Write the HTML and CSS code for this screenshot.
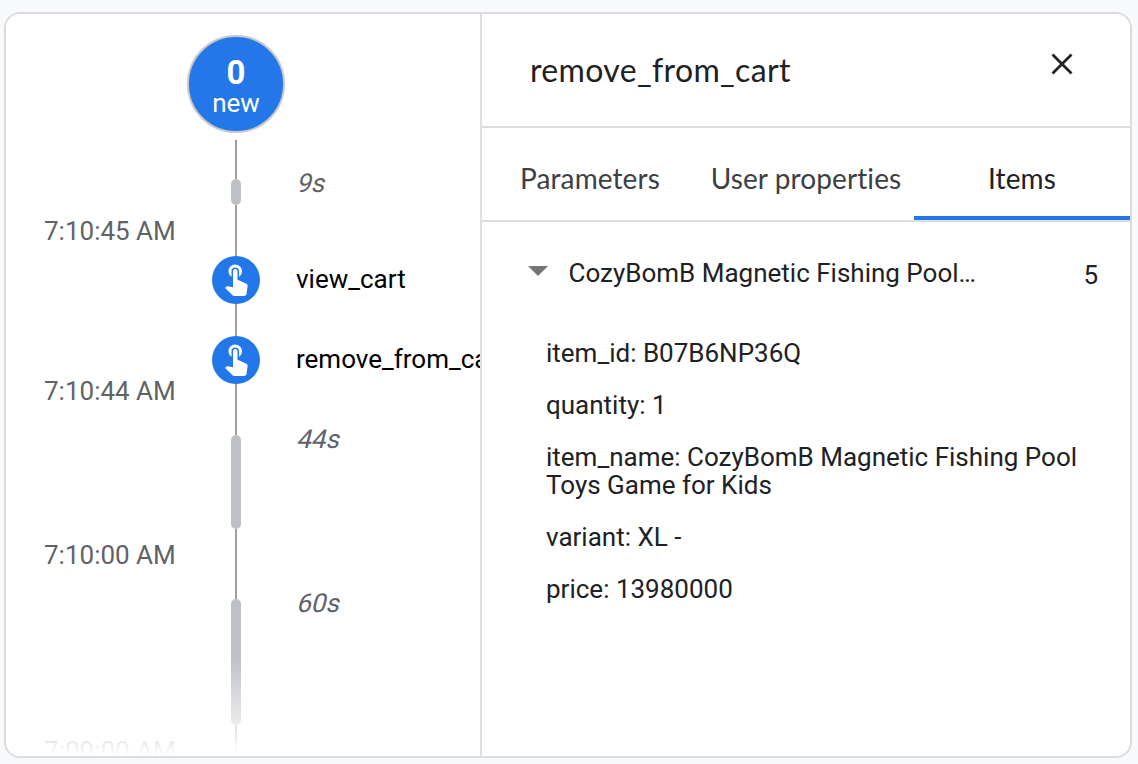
FILE: index.html
```html
<!DOCTYPE html>
<html lang="en">
<head>
<meta charset="utf-8">
<title>DebugView</title>
<link rel="stylesheet" href="styles.css">
</head>
<body>
<main class="card">
  <section class="stream">
    <div class="times">
      <span class="time">7:10:45 AM</span>
      <span class="time gap-160">7:10:44 AM</span>
      <span class="time gap-164">7:10:00 AM</span>
      <span class="time gap-196">7:09:00 AM</span>
    </div>
    <div class="axis">
      <div class="counter"><b class="count">0</b><span class="new">new</span></div>
      <i class="line line-a"></i>
      <i class="bar bar-9"></i>
      <i class="line line-b"></i>
      <span class="event"><svg viewBox="0 0 24 24" width="36" height="36"><path fill="#fff" d="M9 11.24V7.5a2.5 2.5 0 0 1 5 0v3.74c1.21-.81 2-2.18 2-3.74C16 5.01 13.99 3 11.5 3S7 5.01 7 7.5c0 1.56.79 2.93 2 3.74zm9.84 4.63l-4.54-2.26c-.17-.07-.35-.11-.54-.11H13v-6a1.5 1.5 0 0 0-3 0v10.74l-3.43-.72c-.08-.01-.15-.03-.24-.03-.31 0-.59.13-.79.33l-.79.8 4.94 4.94c.27.27.65.44 1.06.44h6.79c.75 0 1.33-.55 1.44-1.28l.75-5.27c.01-.07.02-.14.02-.2 0-.62-.38-1.16-.91-1.38z"/></svg></span>
      <i class="line line-c"></i>
      <span class="event"><svg viewBox="0 0 24 24" width="36" height="36"><path fill="#fff" d="M9 11.24V7.5a2.5 2.5 0 0 1 5 0v3.74c1.21-.81 2-2.18 2-3.74C16 5.01 13.99 3 11.5 3S7 5.01 7 7.5c0 1.56.79 2.93 2 3.74zm9.84 4.63l-4.54-2.26c-.17-.07-.35-.11-.54-.11H13v-6a1.5 1.5 0 0 0-3 0v10.74l-3.43-.72c-.08-.01-.15-.03-.24-.03-.31 0-.59.13-.79.33l-.79.8 4.94 4.94c.27.27.65.44 1.06.44h6.79c.75 0 1.33-.55 1.44-1.28l.75-5.27c.01-.07.02-.14.02-.2 0-.62-.38-1.16-.91-1.38z"/></svg></span>
      <i class="line line-b"></i>
      <i class="bar bar-44"></i>
      <i class="line line-d"></i>
      <i class="bar bar-60"></i>
      <i class="line line-e"></i>
    </div>
    <div class="labels">
      <em class="wait">9s</em>
      <span class="name name-first">view_cart</span>
      <span class="name">remove_from_cart</span>
      <em class="wait">44s</em>
      <em class="wait wait-last">60s</em>
    </div>
    <div class="fade"></div>
  </section>
  <section class="detail">
    <header class="head">
      <h1 class="title">remove_from_cart</h1>
      <svg class="close" viewBox="0 0 22 22" width="22" height="22"><path d="M1.5 1.5l19 19M20.500 1.500l-19 19" stroke="#202124" stroke-width="2.7" fill="none"/></svg>
    </header>
    <nav class="tabs">
      <a class="tab">Parameters</a>
      <a class="tab">User properties</a>
      <a class="tab active">Items</a>
    </nav>
    <div class="item">
      <i class="caret"></i>
      <span class="item-name">CozyBomB Magnetic Fishing Pool…</span>
      <span class="qty">5</span>
    </div>
    <div class="props">
      <p>item_id: B07B6NP36Q</p>
      <p>quantity: 1</p>
      <p>item_name: CozyBomB Magnetic Fishing Pool Toys Game for Kids</p>
      <p>variant: XL -</p>
      <p>price: 13980000</p>
    </div>
  </section>
</main>
</body>
</html>
```
FILE: styles.css
```css
* { box-sizing: border-box; }
body { margin: 0; padding: 12px 6px 6px 4px; height: 764px; overflow: hidden; background: #f8f9fb; font-family: Roboto, sans-serif; font-size: 26px; color: #202124; }
.card { display: flex; height: 746px; border: 2px solid #dadce0; border-radius: 16px; background: #fff; overflow: hidden; }
.stream { position: relative; display: grid; grid-template-columns: 181px 98px 1fr; width: 476px; height: 742px; flex: none; border-right: 2px solid #dfe0e2; overflow: hidden; }
.times { display: flex; flex-direction: column; padding: 202px 0 0 38px; color: #5f6368; }
.time { height: 30px; line-height: 30px; white-space: nowrap; }
.gap-160 { margin-top: 130px; }
.gap-164 { margin-top: 134px; }
.gap-196 { margin-top: 166px; }
.axis { display: flex; flex-direction: column; align-items: center; padding-top: 21px; }
.counter { display: flex; flex-direction: column; align-items: center; width: 98px; height: 98px; margin-bottom: 7px; padding-top: 20px; border: 2px solid #c8c8c8; border-radius: 50%; background: #2377e8; color: #fff; }
.count { font-size: 33px; line-height: 32px; font-weight: 700; }
.new { line-height: 28px; }
.line { flex: none; width: 2px; background: #9e9e9e; }
.line-a { height: 39px; }
.line-b { height: 51px; }
.line-c { height: 32px; }
.line-d { height: 70px; }
.line-e { height: 31px; }
.bar { flex: none; width: 10px; border-radius: 5px; background: #bdc1c6; }
.bar-9 { height: 26px; }
.bar-44 { height: 94px; }
.bar-60 { height: 126px; }
.event { display: flex; flex: none; align-items: center; justify-content: center; width: 48px; height: 48px; padding-bottom: 5px; border-radius: 50%; background: #2377e8; }
.event svg { flex: none; }
.labels { display: flex; flex-direction: column; align-items: flex-start; padding: 154px 0 0 11px; min-width: 0; color: #000; }
.wait, .name { height: 30px; line-height: 30px; white-space: nowrap; }
.wait { color: #5f6368; font-style: normal; transform: skewX(-14deg); transform-origin: 0 24px; }
.name-first { margin-top: 66px; }
.name + .name, .name + .wait { margin-top: 50px; }
.wait-last { margin-top: 134px; }
.fade { position: absolute; left: 0; right: 0; bottom: 0; height: 100px; background: linear-gradient(rgba(255,255,255,0), #fff); }
.detail { flex: 1; min-width: 0; }
.head { display: flex; justify-content: space-between; height: 114px; padding: 39px 57px 0 48px; border-bottom: 2px solid #dadce0; }
.title { margin: -2px 0 0; font: 400 32px/38px Lato, sans-serif; letter-spacing: .35px; }
.close { display: block; }
.tabs { display: grid; grid-template-columns: repeat(3, 216px); height: 94px; border-bottom: 2px solid #dadce0; font: 28px/36px Lato, sans-serif; color: #3c4043; }
.tab { padding-top: 32px; text-align: center; white-space: nowrap; letter-spacing: .1px; }
.active { color: #202124; border-bottom: 4px solid #2377e8; }
.item { display: flex; align-items: flex-start; height: 92px; padding: 36px 32px 0 46px; line-height: 30px; }
.caret { width: 20px; height: 10px; margin: 8px 20.5px 0 0; background: #757575; clip-path: polygon(0 0, 100% 0, 50% 100%); }
.qty { margin: 2px 0 0 auto; }
.props { padding: 25px 40px 0 64px; line-height: 28px; }
.props p { margin: 0 0 24px; }
```
